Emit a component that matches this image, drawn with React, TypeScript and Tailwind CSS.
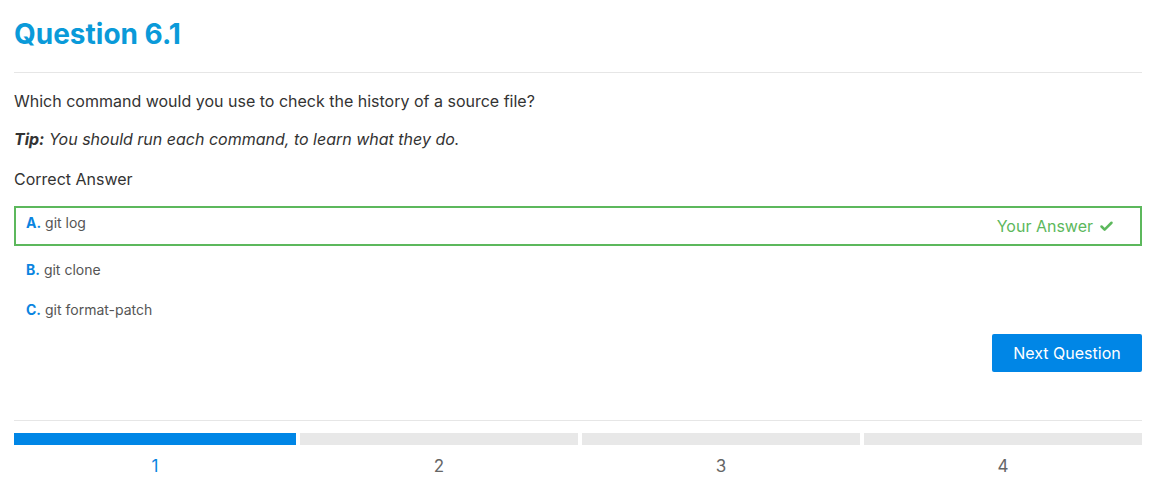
import { Check } from "lucide-react";

const options = [
  { key: "A", text: "git log", chosen: true },
  { key: "B", text: "git clone", chosen: false },
  { key: "C", text: "git format-patch", chosen: false },
];

const steps = [1, 2, 3, 4];

const App = () => {
  return (
    <div className="px-[14px] pt-[17px] text-[#333] font-['Inter',sans-serif]">
      <h1 className="text-[28px] leading-[34px] font-bold text-[#0a9ad9]">Question 6.1</h1>
      <div className="mt-[21px] border-t border-[#e6e6e6]" />

      <p className="mt-[18px] text-[16px] leading-[20px]">
        Which command would you use to check the history of a source file?
      </p>
      <p className="mt-[18px] text-[16px] leading-[20px] italic">
        <b>Tip:</b> You should run each command, to learn what they do.
      </p>
      <p className="mt-[20px] text-[16px] leading-[20px]">Correct Answer</p>

      <div className="mt-[17px] flex flex-col">
        {options.map((o) =>
          o.chosen ? (
            <div
              key={o.key}
              className="h-[40px] border-2 border-[#5cb85c] pl-[10px] pr-[26px] flex items-start justify-between"
            >
              <span className="mt-[5px] text-[14px] leading-[20px] text-[#555]">
                <b className="text-[#0a84e0]">{o.key}.</b> {o.text}
              </span>
              <span className="mt-[8px] flex items-center gap-[6px] text-[16px] leading-[20px] text-[#5cb85c]">
                Your Answer <Check size={15} strokeWidth={4} />
              </span>
            </div>
          ) : (
            <div key={o.key} className="h-[40px] pl-[12px] flex items-center">
              <span className="mt-[8px] text-[14px] leading-[20px] text-[#555]">
                <b className="text-[#0a84e0]">{o.key}.</b> {o.text}
              </span>
            </div>
          )
        )}
      </div>

      <div className="mt-[8px] flex justify-end">
        <button className="w-[150px] h-[38px] bg-[#0086e6] text-white text-[16px] rounded-[2px]">
          Next Question
        </button>
      </div>

      <div className="mt-[48px] border-t border-[#e6e6e6]" />

      <div className="mt-[12px] grid grid-cols-[282px_1fr_1fr_1fr] gap-[4px]">
        {steps.map((s) => (
          <div key={s} className="flex flex-col items-center">
            <div className={`h-[12px] w-full ${s === 1 ? "bg-[#0086e6]" : "bg-[#e8e8e8]"}`} />
            <span
              className={`mt-[11px] text-[17px] leading-[20px] ${s === 1 ? "text-[#0a84e0]" : "text-[#666]"}`}
            >
              {s}
            </span>
          </div>
        ))}
      </div>
    </div>
  );
};

export default App;
